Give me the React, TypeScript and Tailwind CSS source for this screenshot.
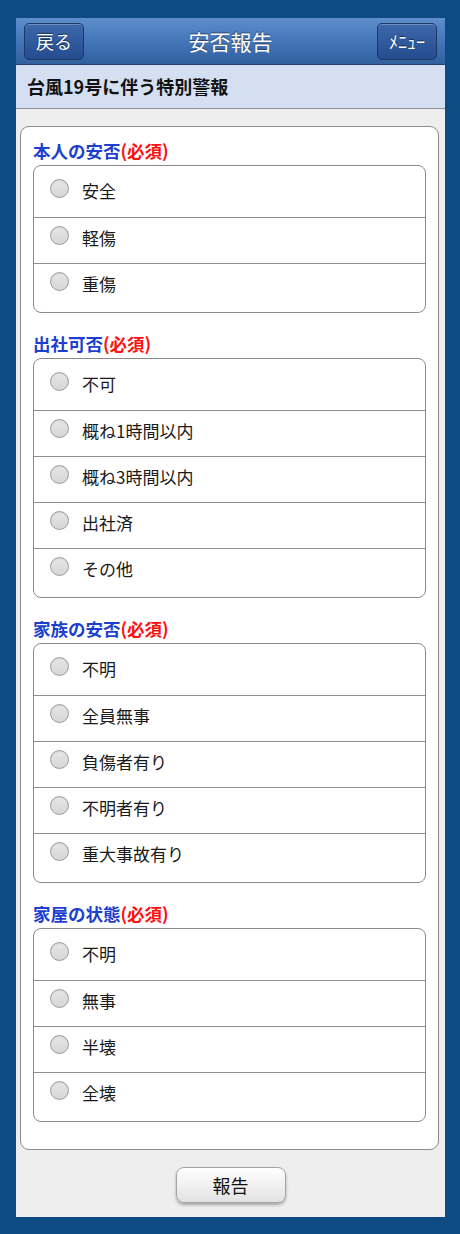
import React from "react";

const FONT = {
  fontFamily: '"Noto Sans CJK JP", "Liberation Sans", sans-serif',
};

const sections: { title: string; items: string[] }[] = [
  { title: "本人の安否", items: ["安全", "軽傷", "重傷"] },
  {
    title: "出社可否",
    items: ["不可", "概ね1時間以内", "概ね3時間以内", "出社済", "その他"],
  },
  {
    title: "家族の安否",
    items: ["不明", "全員無事", "負傷者有り", "不明者有り", "重大事故有り"],
  },
  { title: "家屋の状態", items: ["不明", "無事", "半壊", "全壊"] },
];

function HeaderButton({ label }: { label: string }) {
  return (
    <button className="flex h-[37px] w-[60px] items-center justify-center rounded-[5px] border border-[#1c3865] bg-gradient-to-b from-[#3d68aa] to-[#244d8f] text-[18px] leading-none text-white shadow-[inset_0_1px_0_rgba(255,255,255,0.25)] [text-shadow:0_-1px_1px_rgba(0,0,0,0.5)]">
      {label}
    </button>
  );
}

function Radio() {
  return (
    <span className="mt-[8px] block h-[19px] w-[19px] shrink-0 rounded-full border border-[#9c9c9c] bg-gradient-to-b from-[#e6e6e6] to-[#d6d6d6] shadow-[inset_0_1px_1px_rgba(0,0,0,0.08)]" />
  );
}

function Section({
  title,
  items,
  first,
}: {
  title: string;
  items: string[];
  first?: boolean;
}) {
  return (
    <div className={first ? "" : "mt-[19px]"}>
      <div className="mb-[2px] text-[17.5px] font-bold leading-[24px] text-[#1c3fd0]">
        {title}
        <span className="text-[#ff1010]">(必須)</span>
      </div>
      <div className="rounded-[8px] border border-[#8a8a8a] bg-white pb-[3px] pt-[5px]">
        {items.map((it, i) => (
          <label
            key={it}
            className={`flex h-[46px] items-start pl-[16px] ${
              i > 0 ? "border-t border-[#8f8f8f]" : ""
            }`}
          >
            <Radio />
            <span className="ml-[13px] mt-[8px] text-[17px] leading-[24px] text-[#1a1a1a]">
              {it}
            </span>
          </label>
        ))}
      </div>
    </div>
  );
}

export default function App() {
  return (
    <div
      className="h-[1234px] w-[460px] bg-[#0e4a84] pl-[16px] pr-[15px] pt-[18px]"
      style={FONT}
    >
      <div className="flex h-[1199px] flex-col">
        <div className="flex h-[47px] items-center justify-between border-b border-[#22436f] bg-gradient-to-b from-[#5d8fcd] via-[#4576b8] to-[#31609f] px-[8px]">
          <HeaderButton label="戻る" />
          <div className="text-[21px] leading-none text-white [text-shadow:0_-1px_1px_rgba(0,0,0,0.45)]">
            安否報告
          </div>
          <HeaderButton label="ﾒﾆｭｰ" />
        </div>
        <div className="flex h-[44px] items-center border-b border-[#8a8f98] bg-[#d4e0f1] px-[11px] text-[18px] font-bold text-[#111]">
          台風19号に伴う特別警報
        </div>
        <div className="flex flex-1 flex-col items-center bg-[#eeeeee]">
          <div className="ml-[4px] mr-[6px] mt-[17px] self-stretch rounded-[9px] border border-[#8c8c8c] bg-white px-[12px] pb-[27px] pt-[12px]">
            {sections.map((s, i) => (
              <Section key={s.title} title={s.title} items={s.items} first={i === 0} />
            ))}
          </div>
          <button className="mt-[17px] flex h-[36px] w-[110px] items-center justify-center rounded-[8px] border border-[#a5a5a5] bg-gradient-to-b from-[#ffffff] to-[#e2e2e2] text-[18px] text-[#111] shadow-[0_2px_3px_rgba(0,0,0,0.3)]">
            報告
          </button>
        </div>
      </div>
    </div>
  );
}
